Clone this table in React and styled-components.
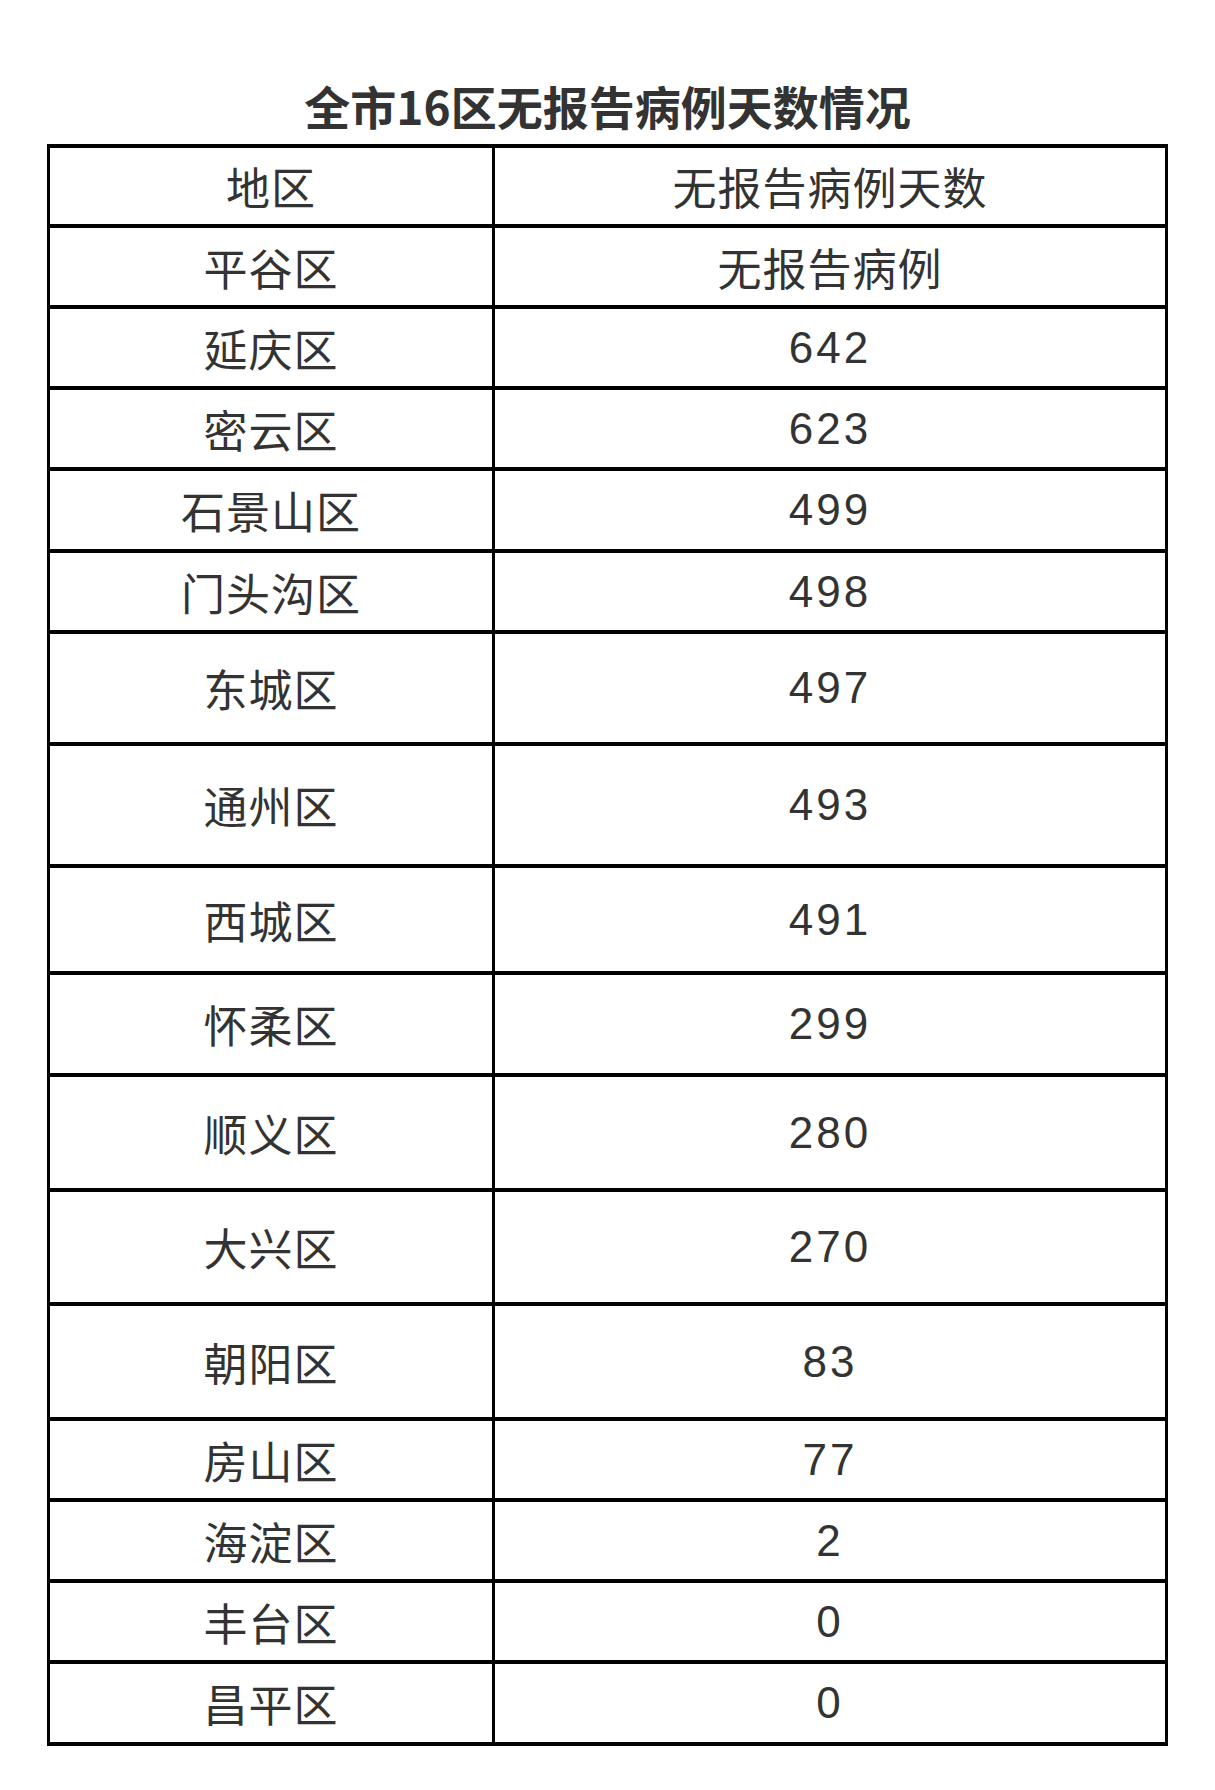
import React from "react";
import styled, { createGlobalStyle } from "styled-components";

const Global = createGlobalStyle`
  html, body { margin: 0; padding: 0; background: #ffffff; }
  body { font-family: "Noto Sans CJK SC", "Noto Sans", sans-serif; color: #333; }
`;

const Page = styled.div`
  width: 1215px;
  min-height: 1790px;
  background: #ffffff;
  display: flex;
  flex-direction: column;
`;

const Title = styled.h1`
  margin: 0;
  padding-top: 77px;
  height: 56px;
  line-height: 56px;
  font-size: 46px;
  font-weight: 700;
  color: #333;
  text-align: center;
`;

const Table = styled.div`
  margin: 11px 0 0 47px;
  width: 1121px;
  box-sizing: border-box;
  border-top: 4px solid #000;
  border-left: 3px solid #000;
  border-right: 3px solid #000;
  display: flex;
  flex-direction: column;
`;

const Row = styled.div`
  display: grid;
  grid-template-columns: 445px 1fr;
  height: ${(p) => p.$h}px;
  box-sizing: border-box;
  border-bottom: 4px solid #000;
`;

const Cell = styled.div`
  display: flex;
  align-items: center;
  justify-content: center;
  font-size: 44px;
  font-weight: 400;
  color: #333;
  letter-spacing: 1px;
  border-right: ${(p) => (p.$first ? "3px solid #000" : "none")};
`;

const Num = styled.span`
  font-family: "Liberation Sans", "Noto Sans", sans-serif;
  font-size: 44px;
  letter-spacing: 3px;
`;

const rows = [
  ["地区", "无报告病例天数", 80, false],
  ["平谷区", "无报告病例", 81, false],
  ["延庆区", "642", 81, true],
  ["密云区", "623", 81, true],
  ["石景山区", "499", 82, true],
  ["门头沟区", "498", 81, true],
  ["东城区", "497", 112, true],
  ["通州区", "493", 122, true],
  ["西城区", "491", 107, true],
  ["怀柔区", "299", 102, true],
  ["顺义区", "280", 115, true],
  ["大兴区", "270", 114, true],
  ["朝阳区", "83", 115, true],
  ["房山区", "77", 81, true],
  ["海淀区", "2", 81, true],
  ["丰台区", "0", 81, true],
  ["昌平区", "0", 82, true],
];

export default function App() {
  return (
    <Page>
      <Global />
      <Title>全市16区无报告病例天数情况</Title>
      <Table>
        {rows.map(([name, val, h, isNum], i) => (
          <Row key={i} $h={h}>
            <Cell $first>{name}</Cell>
            <Cell>{isNum ? <Num>{val}</Num> : val}</Cell>
          </Row>
        ))}
      </Table>
    </Page>
  );
}
